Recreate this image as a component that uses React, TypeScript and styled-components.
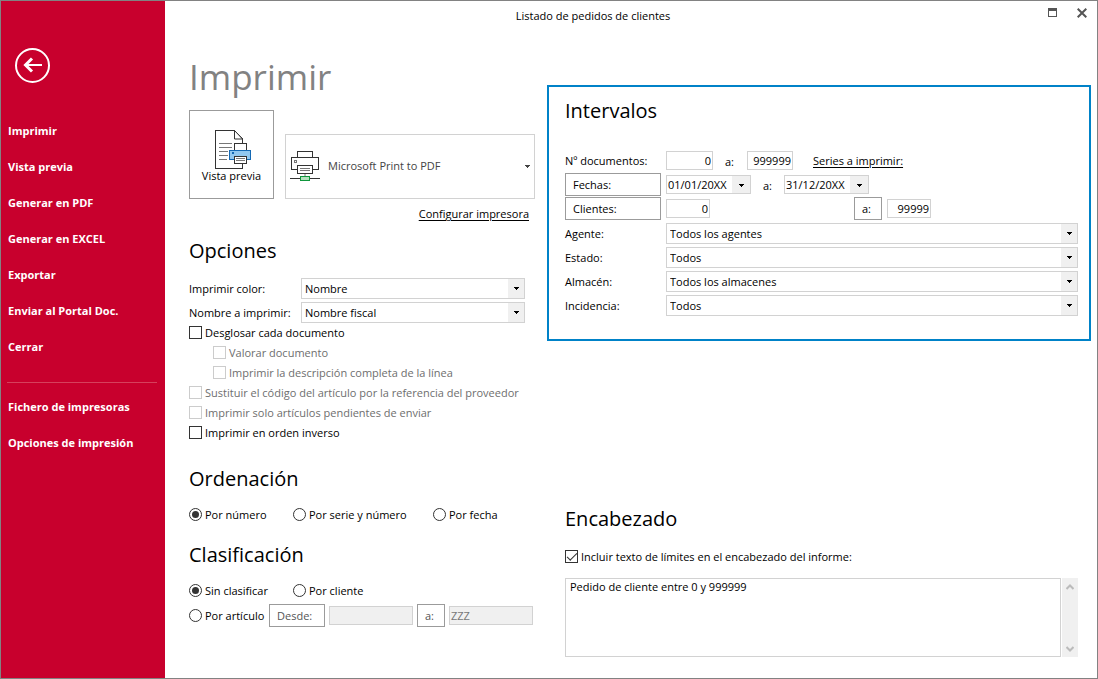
import React, { useId, useState } from 'react';
import styled, { createGlobalStyle, css } from 'styled-components';

const GlobalStyle = createGlobalStyle`
  *, *::before, *::after { box-sizing: border-box; }
  body { margin: 0; background: #fff; }
  body, button, input, select, textarea {
    font-family: 'Segoe UI', 'Open Sans', 'Noto Sans', sans-serif;
    font-size: 11px;
    line-height: 16px;
    color: #000;
  }
`;

const Window = styled.div`
  display: flex;
  min-height: 100vh;
  border: 1px solid #828282;
  background: #fff;
`;

/* ---------- sidebar ---------- */

const Sidebar = styled.aside`
  flex: none;
  width: 164px;
  padding: 47px 7px 0;
  background: #c8002d;
`;

const BackButton = styled.button`
  display: block;
  width: 35px;
  height: 35px;
  margin: 0 0 30px 7px;
  padding: 0;
  border: 0;
  background: none;
  cursor: pointer;
`;

const NavLink = styled.a`
  display: block;
  font-weight: 700;
  line-height: 36px;
  color: #fff;
  text-decoration: none;
  white-space: nowrap;
`;

const NavDivider = styled.hr`
  margin: 17px 1px 6px -1px;
  border: 0;
  border-top: 1px solid #d6405c;
`;

/* ---------- frame ---------- */

const Main = styled.div`
  flex: 1;
  min-width: 0;
  display: flex;
  flex-direction: column;
`;

const TitleBar = styled.header`
  display: flex;
  height: 28px;
`;

const WindowTitle = styled.div`
  flex: 1;
  line-height: 30px;
  text-align: center;
`;

const WindowButtons = styled.div`
  display: flex;
  gap: 12px;
  width: 76px;
  padding: 4px 0 0 23px;
`;

const WindowButton = styled.button`
  display: grid;
  place-items: center;
  width: 17px;
  height: 15px;
  padding: 0;
  border: 0;
  background: none;
`;

const Content = styled.main`
  flex: 1;
  display: grid;
  grid-template-columns: 346px minmax(0, 1fr);
  column-gap: 12px;
  padding: 27px 6px 21px 24px;
`;

const Column = styled.div<{ $top?: number }>`
  display: flex;
  flex-direction: column;
  padding-top: ${({ $top = 0 }) => $top}px;
`;

const PageTitle = styled.h1`
  margin: -11px 0 1px;
  font-size: 35px;
  font-weight: 400;
  line-height: 64px;
  color: #828282;
`;

const SectionTitle = styled.h2`
  margin: 0;
  font-size: 20px;
  font-weight: 400;
  line-height: 30px;
`;

const Section = styled.section<{ $gap: number }>`
  margin-top: ${({ $gap }) => $gap}px;
`;

/* ---------- printer picker ---------- */

const PrinterRow = styled.div`
  display: flex;
  align-items: flex-end;
  gap: 11px;
`;

const PreviewButton = styled.button`
  display: flex;
  flex-direction: column;
  align-items: center;
  width: 85px;
  height: 89px;
  padding: 19px 0 0;
  border: 1px solid #9b9b9b;
  background: #fff;
  line-height: 14px;
  white-space: nowrap;
`;

const PrinterPicker = styled.div`
  position: relative;
  flex: 1;
  height: 65px;

  svg {
    position: absolute;
    pointer-events: none;
  }
  .printer { left: 5px; top: 17px; }
  .arrow { right: 5px; top: 31px; }
`;

const PrinterSelect = styled.select`
  appearance: none;
  width: 100%;
  height: 100%;
  padding: 0 20px 2px 42px;
  border: 1px solid #d2d2d2;
  border-radius: 0;
  background: #fff;
  color: #444;
`;

const TextLink = styled.a`
  color: #000;
  text-decoration: underline;
  text-underline-offset: 2px;
  white-space: nowrap;
`;

const LinkLine = styled.div`
  padding: 7px 6px 0 0;
  text-align: right;
`;

/* ---------- fields ---------- */

const Stack = styled.div<{ $top?: number; $gap?: number; $right?: number }>`
  display: flex;
  flex-direction: column;
  gap: ${({ $gap = 3 }) => $gap}px;
  margin-top: ${({ $top = 0 }) => $top}px;
  padding-right: ${({ $right = 0 }) => $right}px;
`;

const FieldRow = styled.div<{ $label: number }>`
  display: grid;
  grid-template-columns: ${({ $label }) => $label}px minmax(0, 1fr);
  align-items: center;
  height: 21px;
`;

const FieldLabel = styled.label`
  padding-top: 1px;
  white-space: nowrap;
`;

const SelectBox = styled.div`
  position: relative;
  height: 21px;
`;

const SelectControl = styled.select`
  appearance: none;
  display: block;
  width: 100%;
  height: 100%;
  padding: 1px 20px 0 3px;
  border: 1px solid #d2d2d2;
  border-radius: 0;
  background: linear-gradient(#f0f0f0, #f0f0f0) right / 16px 100% no-repeat #fff;
`;

const SelectArrow = styled.svg`
  position: absolute;
  top: 9px;
  right: 6px;
  pointer-events: none;
`;

const tick = css`
  appearance: none;
  flex: none;
  display: grid;
  place-items: center;
  width: 13px;
  height: 13px;
  margin: 0 0 1px;
  border: 1px solid #333;
  background: #fff;
  &:disabled { border-color: #ccc; }
`;

const CheckLabel = styled.label<{ $indent?: boolean; $off?: boolean }>`
  display: flex;
  align-items: center;
  gap: 3px;
  height: 20px;
  padding-left: ${({ $indent }) => ($indent ? 24 : 0)}px;
  color: ${({ $off }) => ($off ? '#6e6e6e' : '#000')};
  white-space: nowrap;
`;

const CheckBox = styled.input`
  ${tick}
  &:checked::after {
    content: '';
    width: 10px;
    height: 5px;
    border: solid #333;
    border-width: 0 0 1px 1px;
    transform: translateY(-1px) rotate(-45deg);
  }
`;

const Radio = styled.input`
  ${tick}
  border-radius: 50%;
  &:checked::after {
    content: '';
    width: 7px;
    height: 7px;
    border-radius: 50%;
    background: #333;
  }
`;

const RadioGrid = styled.div`
  display: grid;
  grid-template-columns: 104px 140px auto;
  margin-top: 11px;
`;

const ArticleRow = styled.div`
  display: grid;
  grid-template-columns: 76px 56px 84px 28px 84px;
  column-gap: 4px;
  align-items: center;
  height: 23px;
  margin-top: 3px;
`;

const RangeButton = styled.button<{ $width?: number }>`
  width: ${({ $width }) => ($width ? `${$width}px` : '100%')};
  height: 23px;
  padding: 0 0 0 7px;
  border: 1px solid #9b9b9b;
  background: #fff;
  text-align: left;
  &:disabled { color: #555; }
`;

const TextBox = styled.input<{ $width?: number; $right?: boolean }>`
  width: ${({ $width }) => ($width ? `${$width}px` : '100%')};
  height: 19px;
  padding: 0 1px;
  border: 1px solid #d2d2d2;
  text-align: ${({ $right }) => ($right ? 'right' : 'left')};
  &:disabled { background: #f0f0f0; color: #777; }
`;

/* ---------- ranges panel ---------- */

const Panel = styled.section`
  padding: 9px 11px 23px 16px;
  border: 2px solid #0082c8;
`;

const RangeRow = styled.div`
  display: grid;
  grid-template-columns: 96px minmax(0, 1fr);
  column-gap: 5px;
  align-items: center;
  height: 23px;
`;

const RangeFields = styled.div`
  display: flex;
  align-items: center;
`;

const To = styled.span<{ $width: number }>`
  width: ${({ $width }) => $width}px;
  padding: 3px 0 0 12px;
`;

const Spacer = styled.div<{ $width: number }>`
  width: ${({ $width }) => $width}px;
`;

const DateBox = styled.div`
  display: flex;
  width: 85px;
  height: 19px;
  border: 1px solid #d2d2d2;
`;

const DateInput = styled.input`
  flex: 1;
  min-width: 0;
  padding: 0 1px;
  border: 0;
`;

const DateButton = styled.button`
  display: grid;
  place-items: center;
  width: 18px;
  padding: 1px 0 0;
  border: 0;
  background: #f0f0f0;
`;

/* ---------- report header ---------- */

const HeaderSection = styled.section`
  margin-top: auto;
  padding: 0 13px 0 18px;
`;

const HeaderCheck = styled.div`
  margin: 13px 0 11px;
`;

const HeaderText = styled.div`
  display: flex;
  gap: 1px;
  height: 79px;
`;

const TextArea = styled.textarea`
  flex: 1;
  min-width: 0;
  padding: 0 4px;
  border: 1px solid #d2d2d2;
  resize: none;
  overflow: hidden;
`;

const ScrollTrack = styled.div`
  display: flex;
  flex-direction: column;
  justify-content: space-between;
  width: 16px;
  background: #f0f0f0;
`;

const ScrollButton = styled.button`
  display: grid;
  place-items: center;
  height: 17px;
  padding: 0;
  border: 0;
  background: none;
`;

/* ---------- drawings ---------- */

const ArrowShape = ({ fill = '#000' }: { fill?: string }) => (
  <path d="M0 0h5v1h-1v1h-1v1h-1v-1h-1v-1h-1z" fill={fill} />
);

const PreviewIcon = () => (
  <svg width="41" height="39" viewBox="-4 0 41 39" fill="none" shapeRendering="crispEdges" aria-hidden="true">
    <path d="M.5.5h19l8 8.500v29H.5z" fill="#fff" stroke="#333" />
    <path d="M19.500.5v8.500h8z" fill="#fff" stroke="#333" shapeRendering="auto" />
    <path d="M4 13.500h13M4 17.500h13M4 21.500h9M4 25.500h9M4 29.500h8" stroke="#777" />
    <path d="M19.500 13.500h12v8h-12z" fill="#fff" stroke="#333" />
    <path d="M14.500 20.500h21v9h-21z" fill="#91c8f0" stroke="#1469b4" />
    <path d="M17 22h2v2h-2z" fill="#1469b4" />
    <path d="M19.500 26.500h12v7h-12z" fill="#fff" stroke="#333" />
    <path d="M21 28.500h9M21 30.500h9" stroke="#777" />
  </svg>
);

const PrinterIcon = () => (
  <svg className="printer" width="31" height="31" viewBox="0 0 31 31" fill="none" shapeRendering="crispEdges" aria-hidden="true">
    <path d="M7.500.5h15v7h-15z" fill="#fff" stroke="#333" />
    <path d="M1.500 6.500h27v12h-27z" fill="#fff" stroke="#333" />
    <path d="M4.500 9.500h2v2h-2z" stroke="#777" />
    <path d="M7.500 14.500h15v8h-15z" fill="#fff" stroke="#333" />
    <path d="M10 17.500h10M10 19.500h10" stroke="#777" />
    <path d="M15 23v2" stroke="#bbb" strokeWidth="2" />
    <path d="M0 27.500h30" stroke="#333" />
    <path d="M10.500 25.500h9v4h-9z" fill="#b4e1be" stroke="#0f963c" />
  </svg>
);

/* ---------- composed parts ---------- */

function Choice({ label, value, width }: { label: string; value: string; width: number }) {
  const id = useId();
  return (
    <FieldRow $label={width}>
      <FieldLabel htmlFor={id}>{label}</FieldLabel>
      <SelectBox>
        <SelectControl id={id}>
          <option>{value}</option>
        </SelectControl>
        <SelectArrow width="5" height="3" aria-hidden="true"><ArrowShape /></SelectArrow>
      </SelectBox>
    </FieldRow>
  );
}

function DateField({ label, value }: { label: string; value: string }) {
  return (
    <DateBox>
      <DateInput aria-label={label} defaultValue={value} />
      <DateButton aria-label={`Calendario: ${label}`}>
        <svg width="5" height="3" aria-hidden="true"><ArrowShape /></svg>
      </DateButton>
    </DateBox>
  );
}

const printOptions = [
  { text: 'Desglosar cada documento' },
  { text: 'Valorar documento', indent: true, off: true },
  { text: 'Imprimir la descripción completa de la línea', indent: true, off: true },
  { text: 'Sustituir el código del artículo por la referencia del proveedor', off: true },
  { text: 'Imprimir solo artículos pendientes de enviar', off: true },
  { text: 'Imprimir en orden inverso' },
];

const actions = ['Imprimir', 'Vista previa', 'Generar en PDF', 'Generar en EXCEL', 'Exportar', 'Enviar al Portal Doc.', 'Cerrar'];
const settings = ['Fichero de impresoras', 'Opciones de impresión'];
const orders = ['Por número', 'Por serie y número', 'Por fecha'];

export default function App() {
  const [order, setOrder] = useState(orders[0]);
  const [group, setGroup] = useState('Sin clasificar');

  const groupRadio = (text: string) => (
    <CheckLabel key={text}>
      <Radio type="radio" name="group" checked={group === text} onChange={() => setGroup(text)} />
      {text}
    </CheckLabel>
  );

  return (
    <>
      <GlobalStyle />
      <Window>
        <Sidebar>
          <BackButton aria-label="Volver">
            <svg width="35" height="35" viewBox="0 0 35 35" fill="none" stroke="#fff" aria-hidden="true">
              <circle cx="17.500" cy="17.500" r="16.500" strokeWidth="2" />
              <path d="M10.500 17H27" strokeWidth="2" />
              <path d="M17 10.500L10.500 17 17 23.500" strokeWidth="3" />
            </svg>
          </BackButton>
          <nav>
            {actions.map((text) => <NavLink key={text} href="#">{text}</NavLink>)}
            <NavDivider />
            {settings.map((text) => <NavLink key={text} href="#">{text}</NavLink>)}
          </nav>
        </Sidebar>

        <Main>
          <TitleBar>
            <WindowTitle>Listado de pedidos de clientes</WindowTitle>
            <WindowButtons>
              <WindowButton aria-label="Maximizar">
                <svg width="9" height="9" shapeRendering="crispEdges" aria-hidden="true">
                  <path d="M.5.5h8v8h-8z" fill="none" stroke="#555" />
                  <path d="M0 0h9v3h-9z" fill="#555" />
                </svg>
              </WindowButton>
              <WindowButton aria-label="Cerrar ventana">
                <svg width="10" height="10" aria-hidden="true">
                  <path d="M.7.7l8.600 8.600M9.300.7L.7 9.300" stroke="#555" strokeWidth="2" />
                </svg>
              </WindowButton>
            </WindowButtons>
          </TitleBar>

          <Content>
            <Column>
              <PageTitle>Imprimir</PageTitle>
              <PrinterRow>
                <PreviewButton><PreviewIcon />Vista previa</PreviewButton>
                <PrinterPicker>
                  <PrinterSelect aria-label="Impresora">
                    <option>Microsoft Print to PDF</option>
                  </PrinterSelect>
                  <PrinterIcon />
                  <svg className="arrow" width="5" height="3" aria-hidden="true"><ArrowShape fill="#444" /></svg>
                </PrinterPicker>
              </PrinterRow>
              <LinkLine><TextLink href="#">Configurar impresora</TextLink></LinkLine>

              <Section $gap={14}>
                <SectionTitle>Opciones</SectionTitle>
                <Stack $top={12} $right={10}>
                  <Choice label="Imprimir color:" value="Nombre" width={112} />
                  <Choice label="Nombre a imprimir:" value="Nombre fiscal" width={112} />
                </Stack>
                {printOptions.map(({ text, indent, off }) => (
                  <CheckLabel key={text} $indent={indent} $off={off}>
                    <CheckBox type="checkbox" disabled={off} />
                    {text}
                  </CheckLabel>
                ))}
              </Section>

              <Section $gap={21}>
                <SectionTitle>Ordenación</SectionTitle>
                <RadioGrid>
                  {orders.map((text) => (
                    <CheckLabel key={text}>
                      <Radio type="radio" name="order" checked={order === text} onChange={() => setOrder(text)} />
                      {text}
                    </CheckLabel>
                  ))}
                </RadioGrid>
              </Section>

              <Section $gap={15}>
                <SectionTitle>Clasificación</SectionTitle>
                <RadioGrid>{['Sin clasificar', 'Por cliente'].map(groupRadio)}</RadioGrid>
                <ArticleRow>
                  {groupRadio('Por artículo')}
                  <RangeButton disabled>Desde:</RangeButton>
                  <TextBox aria-label="Desde artículo" disabled />
                  <RangeButton disabled>a:</RangeButton>
                  <TextBox aria-label="Hasta artículo" defaultValue="ZZZ" disabled />
                </ArticleRow>
              </Section>
            </Column>

            <Column $top={29}>
              <Panel>
                <SectionTitle>Intervalos</SectionTitle>
                <Stack $top={23} $gap={1}>
                  <RangeRow>
                    <FieldLabel htmlFor="doc-from">Nº documentos:</FieldLabel>
                    <RangeFields>
                      <TextBox id="doc-from" $width={47} $right defaultValue="0" />
                      <To $width={34}>a:</To>
                      <TextBox aria-label="Hasta documento" $width={46} $right defaultValue="999999" />
                      <Spacer $width={20} />
                      <TextLink href="#">Series a imprimir:</TextLink>
                    </RangeFields>
                  </RangeRow>
                  <RangeRow>
                    <RangeButton>Fechas:</RangeButton>
                    <RangeFields>
                      <DateField label="Desde fecha" value="01/01/20XX" />
                      <To $width={33}>a:</To>
                      <DateField label="Hasta fecha" value="31/12/20XX" />
                    </RangeFields>
                  </RangeRow>
                  <RangeRow>
                    <RangeButton>Clientes:</RangeButton>
                    <RangeFields>
                      <TextBox aria-label="Desde cliente" $width={44} $right defaultValue="0" />
                      <Spacer $width={144} />
                      <RangeButton $width={28}>a:</RangeButton>
                      <Spacer $width={5} />
                      <TextBox aria-label="Hasta cliente" $width={44} $right defaultValue="99999" />
                    </RangeFields>
                  </RangeRow>
                </Stack>
                <Stack $top={3}>
                  <Choice label="Agente:" value="Todos los agentes" width={101} />
                  <Choice label="Estado:" value="Todos" width={101} />
                  <Choice label="Almacén:" value="Todos los almacenes" width={101} />
                  <Choice label="Incidencia:" value="Todos" width={101} />
                </Stack>
              </Panel>

              <HeaderSection>
                <SectionTitle>Encabezado</SectionTitle>
                <HeaderCheck>
                  <CheckLabel>
                    <CheckBox type="checkbox" defaultChecked />
                    Incluir texto de límites en el encabezado del informe:
                  </CheckLabel>
                </HeaderCheck>
                <HeaderText>
                  <TextArea aria-label="Texto del encabezado" defaultValue="Pedido de cliente entre 0 y 999999" />
                  <ScrollTrack>
                    <ScrollButton aria-label="Subir">
                      <svg width="8" height="6" fill="none" aria-hidden="true"><path d="M.5 5L4 1.500 7.500 5" stroke="#bbb" strokeWidth="2" /></svg>
                    </ScrollButton>
                    <ScrollButton aria-label="Bajar">
                      <svg width="8" height="6" fill="none" aria-hidden="true"><path d="M.5 1L4 4.500 7.500 1" stroke="#bbb" strokeWidth="2" /></svg>
                    </ScrollButton>
                  </ScrollTrack>
                </HeaderText>
              </HeaderSection>
            </Column>
          </Content>
        </Main>
      </Window>
    </>
  );
}
